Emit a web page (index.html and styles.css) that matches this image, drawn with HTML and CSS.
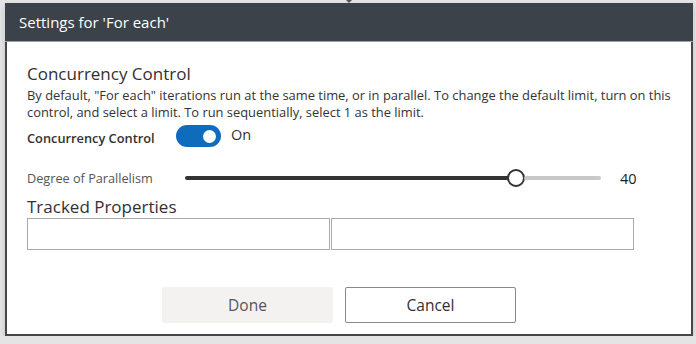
FILE: index.html
```html
<!DOCTYPE html>
<html lang="en">
<head>
    <meta charset="UTF-8">
    <meta name="viewport" content="width=device-width, initial-scale=1.0">
    <title>Settings for 'For each'</title>
    <link rel="stylesheet" href="styles.css">
</head>
<body>
    <div class="notch"></div>
    <div class="dialogo">
        <div class="cabecera">Settings for 'For each'</div>

        <div class="contenido">
            <h2 class="titulo">Concurrency Control</h2>
            <p class="descripcion">By default, "For each" iterations run at the same time, or in parallel. To change the default limit, turn on this control, and select a limit. To run sequentially, select 1 as the limit.</p>

            <div class="fila-toggle">
                <span class="etiqueta-fuerte">Concurrency Control</span>
                <span class="toggle"><span class="toggle-bola"></span></span>
                <span class="toggle-texto">On</span>
            </div>

            <div class="fila-slider">
                <span class="etiqueta">Degree of Parallelism</span>
                <div class="slider">
                    <div class="slider-lleno"></div>
                    <div class="slider-bola"></div>
                    <div class="slider-vacio"></div>
                </div>
                <span class="valor">40</span>
            </div>

            <h2 class="titulo titulo-tracked">Tracked Properties</h2>
            <div class="campos">
                <input type="text" class="campo">
                <input type="text" class="campo">
            </div>
        </div>

        <div class="botones">
            <button type="button" class="boton boton-done">Done</button>
            <button type="button" class="boton boton-cancel">Cancel</button>
        </div>
    </div>
</body>
</html>
```

FILE: styles.css
```css
body {
    margin: 0;
    background-color: #e4e4e4;
    font-family: "Open Sans", "Noto Sans", sans-serif;
    color: #323130;
}

.notch {
    position: absolute;
    top: 0;
    left: 346px;
    width: 0;
    height: 0;
    border-left: 3px solid transparent;
    border-right: 3px solid transparent;
    border-top: 3px solid #555;
}

.dialogo {
    margin: 3px 3px 0 5px;
    width: 684px;
    height: 331px;
    background-color: #fff;
    border: 2px solid #464646;
    border-top: none;
    display: flex;
    flex-direction: column;
    box-shadow: 0 3px 6px rgba(0, 0, 0, 0.15);
}

.cabecera {
    height: 38px;
    margin: 0 -2px;
    padding-left: 14px;
    background-color: #3b424a;
    border-bottom: 1px solid #9aa0a6;
    color: #fff;
    font-size: 15px;
    line-height: 38px;
}

.contenido {
    padding: 20px 0 0 20px;
}

.titulo {
    margin: 0;
    font-size: 17px;
    font-weight: normal;
    line-height: 24px;
}

.descripcion {
    margin: 1px 0 0;
    font-size: 12.9px;
    line-height: 17px;
    color: #333;
    width: 660px;
}

.fila-toggle {
    display: flex;
    align-items: center;
    height: 24px;
    margin-top: 3px;
}

.etiqueta-fuerte {
    width: 149px;
    font-size: 12.8px;
    font-weight: 600;
    padding-top: 4px;
}

.toggle {
    width: 45px;
    height: 22px;
    border-radius: 11px;
    background-color: #0f6cbd;
    display: flex;
    align-items: center;
    justify-content: flex-end;
    box-sizing: border-box;
    padding-right: 5px;
}

.toggle-bola {
    width: 13px;
    height: 13px;
    border-radius: 50%;
    background-color: #fff;
}

.toggle-texto {
    margin-left: 10px;
    font-size: 14.5px;
    margin-top: -4px;
}

.fila-slider {
    display: flex;
    align-items: center;
    height: 24px;
    margin-top: 18px;
}

.etiqueta {
    width: 158px;
    font-size: 12.7px;
    color: #555;
}

.slider {
    display: flex;
    align-items: center;
    width: 416px;
}

.slider-lleno {
    width: 324px;
    height: 4px;
    border-radius: 2px;
    background-color: #333;
}

.slider-bola {
    width: 14px;
    height: 14px;
    border: 2px solid #333;
    border-radius: 50%;
    background-color: #fff;
    margin-left: -2px;
}

.slider-vacio {
    flex: 1;
    height: 4px;
    border-radius: 2px;
    background-color: #c8c8c8;
    margin-left: -1px;
}

.valor {
    margin-left: 19px;
    font-size: 14.5px;
    color: #222;
}

.titulo-tracked {
    margin-top: 6px;
    line-height: 22px;
}

.campos {
    display: flex;
    gap: 1px;
}

.campo {
    width: 303px;
    height: 32px;
    box-sizing: border-box;
    border: 1px solid #aaa;
    margin: 0;
}

.botones {
    display: flex;
    justify-content: center;
    gap: 12px;
    margin-top: 37px;
    padding-right: 20px;
}

.boton {
    width: 171px;
    height: 36px;
    font-family: "Open Sans", "Noto Sans", sans-serif;
    font-size: 15.5px;
    border-radius: 2px;
}

.boton-done {
    background-color: #f3f2f1;
    border: none;
    color: #555;
}

.boton-cancel {
    background-color: #fff;
    border: 1px solid #8a8886;
    color: #323130;
}
```
